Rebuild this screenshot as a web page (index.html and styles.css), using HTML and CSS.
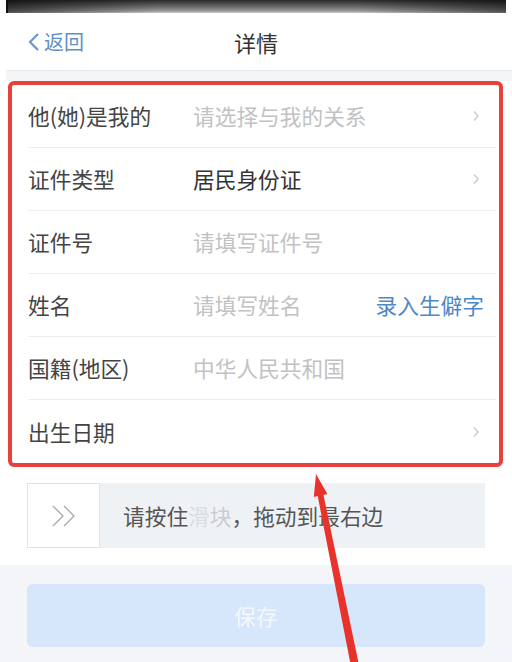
FILE: index.html
```html
<!DOCTYPE html>
<html lang="zh-CN">
<head>
<meta charset="utf-8">
<title>详情</title>
<link rel="stylesheet" href="styles.css">
</head>
<body>
<div class="page">
  <div class="statusbar"></div>
  <header class="navbar">
    <a class="back">
      <svg class="back-icon" width="14" height="20" viewBox="0 0 14 20"><polyline points="11,2 3,10 11,18" fill="none" stroke="#6a97c8" stroke-width="2.2" stroke-linejoin="miter"/></svg>
      <span>返回</span>
    </a>
    <h1 class="title">详情</h1>
  </header>
  <div class="gap"></div>

  <div class="form">
    <div class="row">
      <span class="label">他(她)是我的</span>
      <span class="value placeholder">请选择与我的关系</span>
      <svg class="chev" width="8" height="12" viewBox="0 0 8 12"><polyline points="2,1.5 6,6 2,10.5" fill="none" stroke="#cfcfcf" stroke-width="1.6"/></svg>
    </div>
    <div class="row">
      <span class="label">证件类型</span>
      <span class="value">居民身份证</span>
      <svg class="chev" width="8" height="12" viewBox="0 0 8 12"><polyline points="2,1.5 6,6 2,10.5" fill="none" stroke="#cfcfcf" stroke-width="1.6"/></svg>
    </div>
    <div class="row">
      <span class="label">证件号</span>
      <span class="value placeholder">请填写证件号</span>
    </div>
    <div class="row">
      <span class="label">姓名</span>
      <span class="value placeholder">请填写姓名</span>
      <span class="link">录入生僻字</span>
    </div>
    <div class="row">
      <span class="label">国籍(地区)</span>
      <span class="value placeholder">中华人民共和国</span>
    </div>
    <div class="row last">
      <span class="label">出生日期</span>
      <span class="value"></span>
      <svg class="chev" width="8" height="12" viewBox="0 0 8 12"><polyline points="2,1.5 6,6 2,10.5" fill="none" stroke="#cfcfcf" stroke-width="1.6"/></svg>
    </div>
  </div>

  <div class="slider">
    <div class="handle">
      <svg width="26" height="22" viewBox="0 0 26 22"><polyline points="2,1 12,11 2,21" fill="none" stroke="#a8a8a8" stroke-width="1.3"/><polyline points="13,1 23,11 13,21" fill="none" stroke="#a8a8a8" stroke-width="1.3"/></svg>
    </div>
    <div class="track">请按住<span class="fade1">滑</span><span class="fade2">块</span>，拖动到最右边</div>
  </div>

  <div class="footer">
    <button class="save">保存</button>
  </div>

  <svg class="arrow" width="512" height="662" viewBox="0 0 512 662">
    <polygon points="316,474 327.4,494 323.5,494.9 360,670 352,671.5 317.7,496.1 313.8,497" fill="#e8332c"/>
  </svg>
</div>
</body>
</html>
```

FILE: styles.css
```css
* { box-sizing: border-box; }
html, body { margin: 0; padding: 0; background: #fff; }
body {
  font-family: "Noto Sans CJK SC", "Noto Sans", "Liberation Sans", sans-serif;
  color: #3c3c3c;
}
.page {
  position: relative;
  width: 512px;
  height: 662px;
  overflow: hidden;
  display: flex;
  flex-direction: column;
}
.statusbar {
  height: 13px;
  margin: 0 6px;
  border-left: 2px solid #111;
  background:
    linear-gradient(90deg, rgba(0,0,0,0.55) 0%, rgba(0,0,0,0) 30%, rgba(0,0,0,0) 70%, rgba(0,0,0,0.5) 100%),
    linear-gradient(180deg, #2a2a2a 0%, #6e6e6e 55%, #9a9a9a 85%, #cfcfcf 100%);
}
.navbar {
  position: relative;
  height: 58px;
  display: flex;
  align-items: center;
  border-bottom: 1px solid #e6e8eb;
  margin-left: 6px;
}
.back {
  display: flex;
  align-items: center;
  gap: 3px;
  padding-left: 21px;
  color: #5f8fc6;
  font-size: 20px;
  line-height: 1;
}
.back-icon { display: block; }
.title {
  position: absolute;
  left: 0;
  right: 6px;
  margin: 0;
  text-align: center;
  font-size: 22px;
  font-weight: 400;
  color: #333;
  pointer-events: none;
}
.gap {
  height: 10px;
  background: #f4f5f7;
  margin-left: 6px;
}
.form {
  margin: 0 9px 0 8px;
  border: 4px solid #e8403a;
  border-radius: 6px;
  background: #fff;
}
.row {
  height: 63px;
  display: flex;
  align-items: center;
  margin-left: 16px;
  margin-right: 3px;
  border-bottom: 1px solid #eeeeee;
  font-size: 21.7px;
  line-height: 1;
}
.row.last { border-bottom: none; }
.label {
  width: 165px;
  flex: none;
  color: #444;
}
.value {
  flex: 1;
  color: #333;
}
.placeholder { color: #c2c2c2; }
.chev {
  flex: none;
  margin-right: 16px;
}
.link {
  flex: none;
  color: #4d88c9;
  margin-right: 12px;
}
.slider {
  margin: 16px 27px 0 27px;
  height: 65px;
  display: flex;
  background: #eff2f5;
}
.handle {
  width: 73px;
  flex: none;
  background: #fff;
  border: 1px solid #e3e3e3;
  display: flex;
  align-items: center;
  justify-content: center;
}
.track {
  flex: 1;
  display: flex;
  align-items: center;
  padding-left: 23px;
  font-size: 21.7px;
  color: #555;
}
.fade1 { color: #d9dde2; }
.fade2 { color: #c9cdd2; }
.footer {
  margin-top: 17px;
  flex: 1;
  background: #f3f5f8;
  padding: 19px 27px 0 27px;
}
.save {
  display: block;
  width: 100%;
  height: 63px;
  border: none;
  border-radius: 6px;
  background: #d6e6fb;
  color: #f4f8fe;
  font-family: inherit;
  font-size: 21.7px;
}
.arrow {
  position: absolute;
  left: 0;
  top: 0;
  pointer-events: none;
}
```
